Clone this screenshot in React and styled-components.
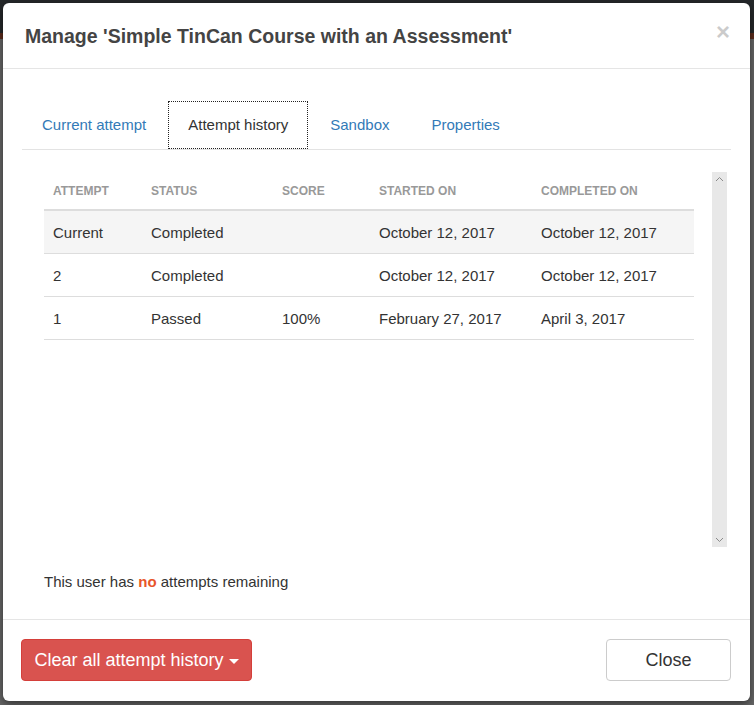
import React from 'react';
import styled, { createGlobalStyle } from 'styled-components';

const GlobalStyle = createGlobalStyle`
  html, body {
    margin: 0;
    padding: 0;
  }
  body {
    font-family: "Liberation Sans", Arial, sans-serif;
    color: #333;
    background: linear-gradient(to bottom, #25282a 0, #25282a 33px, #5b2b1c 33px, #5b2b1c 39px, #666 39px, #666 100%);
    min-height: 705px;
  }
`;

const Backdrop = styled.div`
  padding: 3px 4px 4px 3px;
`;

const Modal = styled.div`
  background: #fff;
  border-radius: 6px;
  box-shadow: 0 3px 9px rgba(0, 0, 0, 0.5);
  height: 698px;
  display: flex;
  flex-direction: column;
`;

const Header = styled.div`
  display: flex;
  align-items: center;
  justify-content: space-between;
  height: 65px;
  padding: 0 20px 0 22px;
  border-bottom: 1px solid #e5e5e5;
`;

const Title = styled.h4`
  margin: 0;
  font-size: 19.5px;
  font-weight: bold;
  color: #444;
  line-height: 22px;
`;

const CloseX = styled.button`
  background: none;
  border: 0;
  padding: 0;
  font-family: "Liberation Sans", Arial, sans-serif;
  font-size: 24px;
  font-weight: bold;
  line-height: 1;
  color: #000;
  opacity: 0.2;
  margin-top: -8px;
  cursor: pointer;
`;

const Body = styled.div`
  flex: 1;
  padding: 32px 19px 27px 19px;
`;

const TabBar = styled.ul`
  display: flex;
  list-style: none;
  margin: 0;
  padding: 0;
  height: 48px;
  border-bottom: 1px solid #e3e3e3;
`;

const Tab = styled.li`
  margin-right: 2px;
`;

const TabLink = styled.a`
  display: flex;
  align-items: center;
  height: 45px;
  padding: 0 19px 1px;
  font-size: 15px;
  text-decoration: none;
  color: ${(p) => (p.$active ? '#333' : '#337ab7')};
  border: 1px ${(p) => (p.$active ? 'dotted #222' : 'solid transparent')};
  background: #fff;
  cursor: pointer;
`;

const Pane = styled.div`
  display: flex;
  height: 375px;
  margin-top: 22px;
  padding: 0 4px 0 22px;
`;

const TableWrap = styled.div`
  flex: 1;
  overflow: hidden;
`;

const Table = styled.table`
  width: 650px;
  border-collapse: collapse;
  table-layout: fixed;
`;

const Th = styled.th`
  text-align: left;
  font-size: 12px;
  font-weight: bold;
  color: #999;
  text-transform: uppercase;
  height: 38px;
  padding: 0 9px;
  border-bottom: 2px solid #ddd;
  box-sizing: border-box;
`;

const Row = styled.tr`
  background: ${(p) => (p.$current ? '#f5f5f5' : '#fff')};
  border-bottom: 1px solid #ddd;
`;

const Td = styled.td`
  height: 42px;
  padding: 0 9px;
  font-size: 15px;
  color: #333;
  white-space: nowrap;
`;

const ScrollTrack = styled.div`
  width: 15px;
  margin-left: 18px;
  background: #e8e8e8;
  display: flex;
  flex-direction: column;
  justify-content: space-between;
  align-items: center;
  padding: 4px 0;
  box-sizing: border-box;
`;

const Remaining = styled.p`
  margin: 25px 0 0 22px;
  font-size: 15px;
  line-height: 20px;
  color: #333;
`;

const No = styled.strong`
  color: #e8562a;
`;

const Footer = styled.div`
  display: flex;
  justify-content: space-between;
  align-items: center;
  padding: 19px 19px 20px 18px;
  border-top: 1px solid #e5e5e5;
`;

const Button = styled.button`
  height: 42px;
  padding: 1px 0 0;
  width: ${(p) => (p.$danger ? '231px' : '125px')};
  font-family: "Liberation Sans", Arial, sans-serif;
  font-size: 18px;
  white-space: nowrap;
  border-radius: 4px;
  border: 1px solid ${(p) => (p.$danger ? '#d43f3a' : '#ccc')};
  background: ${(p) => (p.$danger ? '#d9534f' : '#fff')};
  color: ${(p) => (p.$danger ? '#fff' : '#333')};
  display: flex;
  align-items: center;
  justify-content: center;
  gap: 5px;
  cursor: pointer;
`;

const Caret = styled.span`
  display: inline-block;
  width: 0;
  height: 0;
  border-top: 5px solid #fff;
  border-left: 5px solid transparent;
  border-right: 5px solid transparent;
  margin-top: 2px;
`;

const Chevron = ({ down }) => (
  <svg width="9" height="6" viewBox="0 0 9 6">
    <path
      d={down ? 'M1 1 L4.5 4.5 L8 1' : 'M1 5 L4.5 1.5 L8 5'}
      fill="none"
      stroke="#8a8a8a"
      strokeWidth="1"
    />
  </svg>
);

const columns = [
  { label: 'Attempt', width: 98 },
  { label: 'Status', width: 131 },
  { label: 'Score', width: 97 },
  { label: 'Started on', width: 162 },
  { label: 'Completed on', width: 162 },
];

const attempts = [
  { attempt: 'Current', status: 'Completed', score: '', started: 'October 12, 2017', completed: 'October 12, 2017' },
  { attempt: '2', status: 'Completed', score: '', started: 'October 12, 2017', completed: 'October 12, 2017' },
  { attempt: '1', status: 'Passed', score: '100%', started: 'February 27, 2017', completed: 'April 3, 2017' },
];

const tabs = ['Current attempt', 'Attempt history', 'Sandbox', 'Properties'];

const App = () => {
  return (
    <>
      <GlobalStyle />
      <Backdrop>
        <Modal>
          <Header>
            <Title>Manage 'Simple TinCan Course with an Assessment'</Title>
            <CloseX>×</CloseX>
          </Header>
          <Body>
            <TabBar>
              {tabs.map((t) => (
                <Tab key={t}>
                  <TabLink $active={t === 'Attempt history'}>{t}</TabLink>
                </Tab>
              ))}
            </TabBar>
            <Pane>
              <TableWrap>
                <Table>
                  <colgroup>
                    {columns.map((c) => (
                      <col key={c.label} style={{ width: c.width }} />
                    ))}
                  </colgroup>
                  <thead>
                    <tr>
                      {columns.map((c) => (
                        <Th key={c.label}>{c.label}</Th>
                      ))}
                    </tr>
                  </thead>
                  <tbody>
                    {attempts.map((a) => (
                      <Row key={a.attempt} $current={a.attempt === 'Current'}>
                        <Td>{a.attempt}</Td>
                        <Td>{a.status}</Td>
                        <Td>{a.score}</Td>
                        <Td>{a.started}</Td>
                        <Td>{a.completed}</Td>
                      </Row>
                    ))}
                  </tbody>
                </Table>
              </TableWrap>
              <ScrollTrack>
                <Chevron />
                <Chevron down />
              </ScrollTrack>
            </Pane>
            <Remaining>
              This user has <No>no</No> attempts remaining
            </Remaining>
          </Body>
          <Footer>
            <Button $danger>
              Clear all attempt history <Caret />
            </Button>
            <Button>Close</Button>
          </Footer>
        </Modal>
      </Backdrop>
    </>
  );
};

export default App;
